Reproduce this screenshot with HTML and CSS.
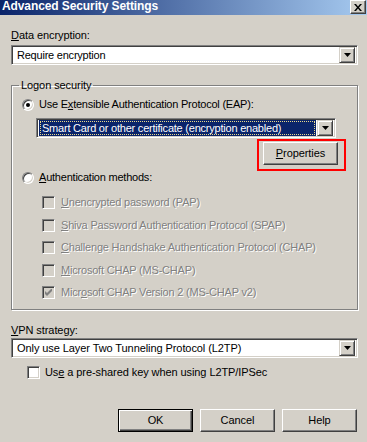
FILE: index.html
```html
<!DOCTYPE html>
<html lang="en">
<head>
    <meta charset="UTF-8">
    <title>Advanced Security Settings</title>
    <link rel="stylesheet" href="styles.css">
</head>
<body>
    <div class="dialog">
        <div class="titlebar">
            <span class="title">Advanced Security Settings</span>
            <span class="close">
                <svg width="8" height="7" viewBox="0 0 8 7"><path d="M0 0h2l2 2.5L6 0h2L5 3.5 8 7H6L4 4.5 2 7H0l3-3.5z" fill="#000"/></svg>
            </span>
        </div>

        <div class="content">
            <div class="label label-data"><u>D</u>ata encryption:</div>
            <div class="combo">
                <span class="combo-text tight">Require encryption</span>
                <span class="drop"><svg width="7" height="4" viewBox="0 0 7 4"><path d="M0 0h7L3.5 4z" fill="#000"/></svg></span>
            </div>

            <fieldset class="group">
                <legend>Logon security</legend>

                <div class="option">
                    <span class="radio checked"></span>
                    <span class="tight">Use E<u>x</u>tensible Authentication Protocol (EAP):</span>
                </div>

                <div class="combo combo-eap">
                    <span class="combo-text selected"><span class="focus tight">Smart Card or other certificate (encryption enabled)</span></span>
                    <span class="drop"><svg width="7" height="4" viewBox="0 0 7 4"><path d="M0 0h7L3.5 4z" fill="#000"/></svg></span>
                </div>

                <div class="props-row">
                    <button class="btn"><u>P</u>roperties</button>
                </div>

                <div class="option option-auth">
                    <span class="radio"></span>
                    <span class="tight"><u>A</u>uthentication methods:</span>
                </div>

                <ul class="methods">
                    <li class="check-row disabled"><span class="check"></span><span><u>U</u>nencrypted password (PAP)</span></li>
                    <li class="check-row disabled"><span class="check"></span><span><u>S</u>hiva Password Authentication Protocol (SPAP)</span></li>
                    <li class="check-row disabled"><span class="check"></span><span><u>C</u>hallenge Handshake Authentication Protocol (CHAP)</span></li>
                    <li class="check-row disabled"><span class="check"></span><span><u>M</u>icrosoft CHAP (MS-CHAP)</span></li>
                    <li class="check-row disabled"><span class="check"><svg width="7" height="7" viewBox="0 0 7 7"><path d="M0 2v3l2 2L7 2V-1L2 4z" fill="#808080"/></svg></span><span>Micr<u>o</u>soft CHAP Version 2 (MS-CHAP v2)</span></li>
                </ul>
            </fieldset>

            <div class="label label-vpn"><u>V</u>PN strategy:</div>
            <div class="combo combo-vpn">
                <span class="combo-text">Only use Layer Two Tunneling Protocol (L2TP)</span>
                <span class="drop"><svg width="7" height="4" viewBox="0 0 7 4"><path d="M0 0h7L3.5 4z" fill="#000"/></svg></span>
            </div>

            <div class="check-row preshared">
                <span class="check"></span>
                <span>Us<u>e</u> a pre-shared key when using L2TP/IPSec</span>
            </div>

            <div class="buttons">
                <button class="btn btn-default">OK</button>
                <button class="btn">Cancel</button>
                <button class="btn">Help</button>
            </div>
        </div>

        <div class="highlight"></div>
    </div>
</body>
</html>
```

FILE: styles.css
```css
:root {
    --face: #D4D0C8;
    --shadow: #808080;
    --dark: #404040;
    --light: #FFFFFF;
    --select: #0A246A;
}

* {
    margin: 0;
    padding: 0;
    box-sizing: border-box;
}

body {
    width: 367px;
    height: 442px;
    overflow: hidden;
    background: var(--face);
    font-family: "Liberation Sans", Arial, sans-serif;
    font-size: 11px;
    line-height: 13px;
    color: #000;
    letter-spacing: -0.08px;
}

.dialog {
    position: relative;
    height: 100%;
}

u {
    text-decoration: underline;
    text-underline-offset: 1px;
}

.tight {
    letter-spacing: -0.22px;
}

/* title bar */
.titlebar {
    height: 15px;
    display: flex;
    align-items: flex-start;
    justify-content: space-between;
    background: linear-gradient(to right, #0A246A, #A6CAF0);
    padding-left: 2px;
}

.title {
    color: #fff;
    font-weight: bold;
    font-size: 12px;
    line-height: 13px;
    letter-spacing: -0.1px;
}

.close {
    width: 16px;
    height: 14px;
    margin-right: 1px;
    background: var(--face);
    border: 1px solid;
    border-color: var(--light) var(--dark) var(--dark) var(--light);
    box-shadow: inset -1px -1px var(--shadow);
    display: flex;
    align-items: center;
    justify-content: center;
}

/* main area */
.content {
    display: flex;
    flex-direction: column;
    padding: 14px 9px 0 11px;
}

.label-data {
    margin-bottom: 3px;
}

.combo {
    height: 20px;
    display: flex;
    align-items: center;
    background: #fff;
    border: 1px solid;
    border-color: var(--shadow) var(--light) var(--light) var(--shadow);
    box-shadow: inset 1px 1px var(--dark), inset -1px -1px var(--face);
    padding: 2px;
}

.combo-text {
    flex: 1;
    height: 16px;
    display: flex;
    align-items: center;
    padding-left: 3px;
    white-space: nowrap;
}

.combo-text.selected {
    background: var(--select);
    color: #fff;
    padding: 1px;
    margin-right: 1px;
}

.focus {
    flex: 1;
    height: 14px;
    display: flex;
    align-items: center;
    padding-left: 1px;
    border: 1px dotted #E8D88A;
}

.drop {
    width: 16px;
    height: 16px;
    background: var(--face);
    border: 1px solid;
    border-color: var(--face) var(--dark) var(--dark) var(--face);
    box-shadow: inset 1px 1px var(--light), inset -1px -1px var(--shadow);
    display: flex;
    align-items: center;
    justify-content: center;
}

/* group box */
.group {
    margin-top: 14px;
    border: 1px solid var(--shadow);
    box-shadow: inset 1px 1px var(--light), 1px 1px var(--light);
    padding: 6px 0 10px 0;
    min-width: 0;
}

.group legend {
    margin-left: 7px;
    padding: 0 2px;
}

.option {
    display: flex;
    align-items: center;
    gap: 5px;
    height: 13px;
    padding-left: 10px;
}

.option-auth {
    margin-top: 6px;
}

.radio {
    width: 12px;
    height: 12px;
    border-radius: 50%;
    background: #fff;
    border: 1px solid;
    border-color: var(--shadow) var(--light) var(--light) var(--shadow);
    box-shadow: inset 1px 1px var(--dark), inset -1px -1px var(--face);
    display: flex;
    align-items: center;
    justify-content: center;
}

.radio.checked::after {
    content: "";
    width: 4px;
    height: 4px;
    border-radius: 50%;
    background: #000;
}

.combo-eap {
    margin: 7px 21px 0 24px;
}

.props-row {
    display: flex;
    justify-content: flex-end;
    padding-right: 19px;
    margin-top: 4px;
}

.methods {
    list-style: none;
    display: flex;
    flex-direction: column;
    gap: 9.5px;
    margin-top: 12px;
    padding-left: 30px;
}

.check-row {
    display: flex;
    align-items: center;
    gap: 6px;
    height: 13px;
    white-space: nowrap;
}

.check {
    width: 13px;
    height: 13px;
    flex: none;
    background: #fff;
    border: 1px solid;
    border-color: var(--shadow) var(--light) var(--light) var(--shadow);
    box-shadow: inset 1px 1px var(--dark), inset -1px -1px var(--face);
    display: flex;
    align-items: center;
    justify-content: center;
}

.disabled {
    color: var(--shadow);
    text-shadow: 1px 1px var(--light);
    letter-spacing: -0.2px;
}

.disabled .check {
    background: var(--face);
}

.label-vpn {
    margin-top: 14px;
}

.combo-vpn {
    margin-top: 1px;
}

.preshared {
    margin-top: 8px;
    padding-left: 16px;
    gap: 5px;
}

/* buttons */
.btn {
    width: 75px;
    height: 23px;
    font: inherit;
    letter-spacing: inherit;
    color: #000;
    background: var(--face);
    border: 1px solid;
    border-color: var(--light) var(--dark) var(--dark) var(--light);
    box-shadow: inset -1px -1px var(--shadow);
}

.btn-default {
    border-color: #000;
    box-shadow: inset 1px 1px var(--light), inset -1px -1px var(--dark), inset -2px -2px var(--shadow);
}

.buttons {
    display: flex;
    justify-content: flex-end;
    gap: 7px;
    margin-top: 30px;
    padding-right: 1px;
}

/* annotation drawn on top of the screenshot */
.highlight {
    position: absolute;
    left: 257px;
    top: 139px;
    width: 89px;
    height: 32px;
    border: 2px solid #FF0000;
}
```
